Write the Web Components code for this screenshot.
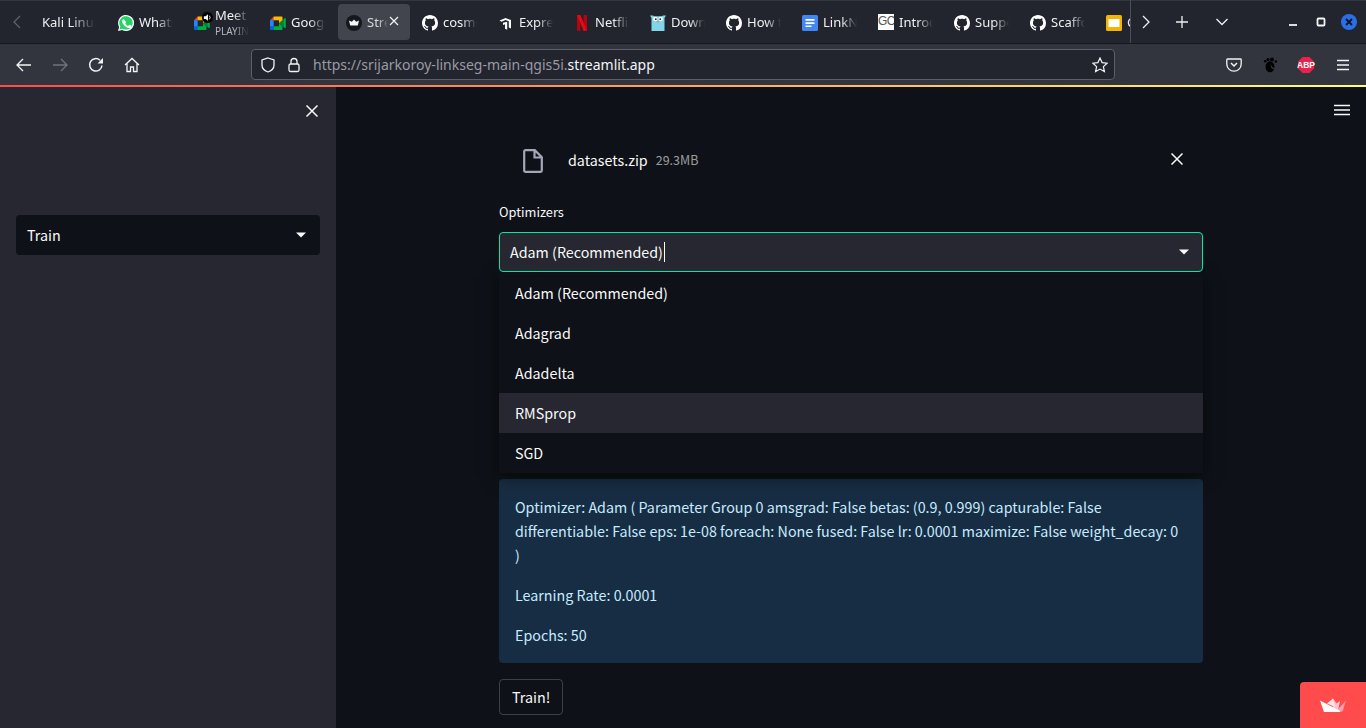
<!DOCTYPE html>
<html>
<head>
<meta charset="utf-8">
<title>linkseg</title>
<style>
  html, body { margin: 0; height: 728px; overflow: hidden; background: #0e1117; }
  body { display: flex; flex-direction: column; font-family: "Noto Sans", sans-serif; }
</style>
</head>
<body>
<browser-tabs>
  <browser-tab>Kali Linux</browser-tab>
  <browser-tab icon="whatsapp">WhatsApp</browser-tab>
  <browser-tab icon="meet" playing>Meet</browser-tab>
  <browser-tab icon="meet">Google Meet</browser-tab>
  <browser-tab icon="streamlit" active>Streamlit</browser-tab>
  <browser-tab icon="github">cosmos</browser-tab>
  <browser-tab icon="express">Express</browser-tab>
  <browser-tab icon="netflix">Netflix</browser-tab>
  <browser-tab icon="gopher">Downloads</browser-tab>
  <browser-tab icon="github">How to</browser-tab>
  <browser-tab icon="docs">LinkNet</browser-tab>
  <browser-tab icon="gc">Introduction</browser-tab>
  <browser-tab icon="github">Support</browser-tab>
  <browser-tab icon="github">Scaffold</browser-tab>
  <browser-tab icon="slides">Google</browser-tab>
</browser-tabs>
<nav-bar></nav-bar>
<app-shell>
  <app-sidebar slot="side">
    <st-select>Train</st-select>
  </app-sidebar>
  <file-row name="datasets.zip" size="29.3MB"></file-row>
  <st-field label="Optimizers">
    <st-select focused>Adam (Recommended)</st-select>
    <st-menu highlight="3">
      <div>Adam (Recommended)</div>
      <div>Adagrad</div>
      <div>Adadelta</div>
      <div>RMSprop</div>
      <div>SGD</div>
    </st-menu>
  </st-field>
  <st-info>
    <p>Optimizer: Adam ( Parameter Group 0 amsgrad: False betas: (0.9, 0.999) capturable: False differentiable: False eps: 1e-08 foreach: None fused: False lr: 0.0001 maximize: False weight_decay: 0<br>)</p>
    <p>Learning Rate: 0.0001</p>
    <p>Epochs: 50</p>
  </st-info>
  <st-button>Train!</st-button>
</app-shell>

<script>
const GITHUB = '<svg width="16" height="16" viewBox="0 0 16 16"><path fill="#fff" d="M8 0C3.58 0 0 3.58 0 8c0 3.54 2.29 6.53 5.47 7.59.4.07.55-.17.55-.38 0-.19-.01-.82-.01-1.49-2.01.37-2.53-.49-2.69-.94-.09-.23-.48-.94-.82-1.13-.28-.15-.68-.52-.01-.53.63-.01 1.08.58 1.23.82.72 1.21 1.87.87 2.33.66.07-.52.28-.87.51-1.07-1.78-.2-3.64-.89-3.64-3.95 0-.87.31-1.59.82-2.15-.08-.2-.36-1.02.08-2.12 0 0 .67-.21 2.2.82.64-.18 1.32-.27 2-.27.68 0 1.36.09 2 .27 1.53-1.04 2.2-.82 2.2-.82.44 1.1.16 1.92.08 2.12.51.56.82 1.27.82 2.15 0 3.07-1.87 3.75-3.65 3.95.29.25.54.73.54 1.48 0 1.07-.01 1.93-.01 2.2 0 .21.15.46.55.38A8.013 8.013 0 0016 8c0-4.42-3.58-8-8-8z"/></svg>';
const MEET = '<svg width="16" height="16" viewBox="0 0 16 16"><path fill="#00832d" d="M9 8l2 2.2 2.6 1.7.5-3.9-.5-3.8-2.7 1.4z"/><path fill="#0066da" d="M0 11.3V14c0 .6.5 1 1 1h2.7l.6-2-.6-1.7-1.9-.6z"/><path fill="#e94235" d="M3.7 1.5L0 5.2l1.9.5 1.8-.5.5-1.7z"/><path fill="#2684fc" d="M3.7 5.2H0v6.1h3.7z"/><path fill="#00ac47" d="M14.9 3.2L13.6 4.1v7.8l1.3 1c.4.3.9 0 .9-.5V3.700c0-.5-.5-.8-.9-.5zM9 8v3.300H3.700V15h7.800c.6 0 1-.5 1-1v-2.300z"/><path fill="#ffba00" d="M11.500 1.500H3.700v3.700H9V8l3.500-2.900V2.500c0-.6-.4-1-1-1z"/></svg>';
const TAB_ICONS = {
  github: GITHUB,
  meet: MEET,
  whatsapp: '<svg width="16" height="16" viewBox="0 0 16 16"><path fill="#fff" d="M0 16l1.100-4.100A8 8 0 1 1 4.200 15z"/><path fill="#25d366" d="M1.500 14.500l.8-3A6.700 6.700 0 1 1 4.600 13.700z"/><path fill="#fff" d="M5.700 4.300c-.2 0-.5 0-.7.300-.3.300-.9.900-.9 2s.9 2.300 1 2.400c.1.200 1.700 2.800 4.300 3.700 1.700.6 2.300.4 2.700.3.600-.1 1.300-.6 1.400-1.100.1-.5.1-1 .1-1.100-.1-.1-.2-.2-.5-.3l-1.500-.7c-.2-.1-.4-.1-.5.100l-.7.900c-.1.100-.3.200-.5.100-.9-.4-1.800-1-2.600-2.300-.1-.2 0-.3.100-.4l.5-.6c.1-.2.1-.3 0-.5L6.300 4.700c-.1-.3-.3-.4-.6-.4z"/></svg>',
  streamlit: '<svg width="16" height="16" viewBox="0 0 16 16"><circle cx="8" cy="8" r="8" fill="#15171e"/><path fill="#f4f4f6" d="M3 5.500l2.800 1.300L8 4.500l2.200 2.300L13 5.500l-1.200 5H4.200z"/></svg>',
  express: '<svg width="16" height="16" viewBox="0 0 16 16"><path fill="#fff" d="M1.500 5.500L7.500 3 13 5v8.500l-2.200-1V6.300L7.500 5 3.500 6.800zM5 7.800L9.200 6.800v8L7 13.700V9.300L5 10z"/></svg>',
  netflix: '<svg width="16" height="16" viewBox="0 0 16 16"><path fill="#b1060f" d="M3 0h3.400v16L3 15.500z"/><path fill="#b1060f" d="M9.600 0H13v15.500L9.600 16z"/><path fill="#e50914" d="M3 0h3.400l6.600 15.500L9.600 16z"/></svg>',
  gopher: '<svg width="16" height="16" viewBox="0 0 16 16"><path fill="#7fd5ea" d="M0 .5h3l1 .7h8l1-.7h3l-1.500 2.500V16H1.500V3z"/><circle cx="5.300" cy="4" r="2.200" fill="#fff"/><circle cx="10.700" cy="4" r="2.200" fill="#fff"/><circle cx="5.800" cy="4.200" r=".9" fill="#1a2a33"/><circle cx="10.200" cy="4.200" r=".9" fill="#1a2a33"/><path fill="#c89a78" d="M6.800 5.800h2.400v1.600H6.800z"/></svg>',
  docs: '<svg width="16" height="16" viewBox="0 0 16 16"><rect width="16" height="16" rx="1.500" fill="#4285f4"/><path fill="#fff" d="M3.500 4h9v1.700h-9zM3.500 7.200h9v1.700h-9zM3.500 10.400h6v1.700h-6z"/></svg>',
  slides: '<svg width="16" height="16" viewBox="0 0 16 16"><rect width="16" height="16" rx="1.500" fill="#f4b400"/><rect x="2.500" y="4" width="11" height="8" fill="#fff"/></svg>',
};
TAB_ICONS.gc = '<span style="display:block;width:16px;height:16px;background:#fff;color:#555;font:400 12px/15px \'Liberation Sans\',sans-serif;letter-spacing:-.5px;overflow:hidden">GC</span>';

class BrowserTab extends HTMLElement {
  connectedCallback() {
    const icon = TAB_ICONS[this.getAttribute("icon")] || "";
    const active = this.hasAttribute("active");
    const playing = this.hasAttribute("playing");
    this.attachShadow({mode: "open"}).innerHTML = `
      <style>
        :host { display: flex; align-items: center; flex: none; width: 72px; height: 36px; margin-right: 4px;
                box-sizing: border-box; padding-left: 8px; gap: 5px; border-radius: 4px; position: relative; }
        :host([active]) { background: #42444e; }
        .ic { width: 16px; height: 16px; flex: none; position: relative; }
        .tx { flex: 1; min-width: 0; overflow: hidden; white-space: nowrap; font-size: 13px; line-height: 18px; color: #f0f0f3;
              -webkit-mask-image: linear-gradient(90deg, #000 50%, transparent 92%); margin-right: 6px; }
        :host([active]) .tx { margin-right: 20px; opacity: .85; }
        .sub { display: block; font-size: 10px; line-height: 14px; color: #b6b7bd; }
        .main { display: block; }
        .spk { position: absolute; left: 8px; top: -2px; width: 11px; height: 11px; background: #000; border-radius: 50%; }
        .x { position: absolute; left: 50px; top: 11px; }
      </style>
      ${icon ? `<span class="ic">${icon}${playing ? `<span class="spk"><svg style="display:block" width="11" height="11" viewBox="0 0 12 12"><path fill="#fff" d="M2 4.500h2L6.500 2.500v7L4 7.500H2z"/><path fill="none" stroke="#fff" d="M8 4a3 3 0 0 1 0 4"/></svg></span>` : ""}</span>` : ""}
      <span class="tx"><span class="main"><slot></slot></span>${playing ? `<span class="sub">PLAYING</span>` : ""}</span>
      ${active ? `<svg class="x" width="12" height="12" viewBox="0 0 12 12"><path stroke="#f4f4f6" stroke-width="1.200" d="M2 2l8 8M10 2l-8 8"/></svg>` : ""}
    `;
  }
}
customElements.define("browser-tab", BrowserTab);

class BrowserTabs extends HTMLElement {
  constructor() {
    super();
    this.attachShadow({mode: "open"}).innerHTML = `
      <style>
        :host { display: flex; height: 44px; flex: none; background: #22242e; box-shadow: inset 0 1px 0 #33353f, inset 0 -1px 0 #16171d; color: #fff; }
        .back { width: 34px; flex: none; display: flex; align-items: center; padding-left: 12px; box-sizing: border-box; }
        .strip { width: 1096px; flex: none; display: flex; align-items: center; overflow: hidden; box-sizing: border-box; }
        .end { flex: 1; display: flex; align-items: center; border-left: 1px solid #4c4e58; height: 43px; }
        .btn { display: flex; align-items: center; justify-content: center; flex: none; }
        .win { width: 16px; height: 16px; margin-right: 12px; }
      </style>
      <div class="back"><svg width="10" height="14" viewBox="0 0 10 14"><path fill="none" stroke="#5f616a" stroke-width="1.300" d="M8 1L2 7l6 6"/></svg></div>
      <div class="strip"><slot></slot></div>
      <div class="end">
        <span class="btn" style="width:29px"><svg width="10" height="14" viewBox="0 0 10 14"><path fill="none" stroke="#f0f0f3" stroke-width="1.300" d="M2 1l6 6-6 6"/></svg></span>
        <span class="btn" style="width:43px"><svg width="14" height="14" viewBox="0 0 14 14"><path stroke="#f0f0f3" stroke-width="1.300" d="M7 1v12M1 7h12"/></svg></span>
        <span class="btn" style="width:37px"><svg width="14" height="10" viewBox="0 0 14 10"><path fill="none" stroke="#f0f0f3" stroke-width="1.300" d="M1.500 2l5.500 5.500L12.500 2"/></svg></span>
        <span class="btn win" style="margin-left:45px"><svg width="10" height="10" viewBox="0 0 10 10" style="margin-top:4px"><rect x="1" y="5" width="8" height="2" fill="#dcdce0"/></svg></span>
        <span class="btn win"><svg width="10" height="10" viewBox="0 0 10 10"><rect x="1.500" y="1.500" width="7" height="7" rx="1" fill="none" stroke="#f4f4f6" stroke-width="1.800"/></svg></span>
        <span class="btn win" style="background:#2a6fe8;border-radius:50%"><svg width="8" height="8" viewBox="0 0 8 8"><path stroke="#12161f" stroke-width="1.800" d="M1 1l6 6M7 1L1 7"/></svg></span>
      </div>
    `;
  }
}
customElements.define("browser-tabs", BrowserTabs);

class NavBar extends HTMLElement {
  constructor() {
    super();
    this.attachShadow({mode: "open"}).innerHTML = `
      <style>
        :host { display: flex; align-items: center; height: 41px; flex: none; background: #32343e; }
        .ic { display: flex; align-items: center; justify-content: center; flex: none; width: 36px; height: 32px; }
        .url { display: flex; align-items: center; width: 864px; height: 31px; margin-left: 101px; box-sizing: border-box; flex: none;
               background: #22242e; border: 1px solid #5c5e68; border-radius: 4px; color: #9a9ba3; font-size: 14px; padding: 0 6px 0 8px; }
        .url b { font-weight: 400; color: #f4f4f6; }
        .t { flex: 1; margin-left: 12px; white-space: nowrap; }
        .right { display: flex; align-items: center; margin-left: 101px; }
        .right .ic { width: 36px; }
        .right .ic:last-child { margin-left: 1px; }
        .abp { font: 700 8.500px "Liberation Sans", sans-serif; fill: #fff; }
      </style>
      <span class="ic" style="margin-left:6px"><svg width="16" height="14" viewBox="0 0 16 14"><path fill="none" stroke="#f4f4f6" stroke-width="1.300" d="M15 7H1.500M7 1L1 7l6 6"/></svg></span>
      <span class="ic"><svg width="16" height="14" viewBox="0 0 16 14"><path fill="none" stroke="#71737c" stroke-width="1.300" d="M1 7h13.500M9 1l6 6-6 6"/></svg></span>
      <span class="ic"><svg width="16" height="16" viewBox="0 0 16 16"><path fill="none" stroke="#f4f4f6" stroke-width="1.500" d="M14 8.500A6.200 6.200 0 1 1 12 3.200"/><path fill="#f4f4f6" d="M15 1v5.500H9.500z"/></svg></span>
      <span class="ic"><svg width="16" height="16" viewBox="0 0 16 16"><path fill="none" stroke="#f4f4f6" stroke-width="1.300" d="M1 8l7-6.500L15 8M3 6.500V14.500h3.500V10h3v4.500H13V6.500"/></svg></span>
      <div class="url">
        <svg width="16" height="16" viewBox="0 0 16 16"><path fill="none" stroke="#f4f4f6" stroke-width="1.300" d="M8 1l6 2v5c0 3.500-3 6-6 7-3-1-6-3.500-6-7V3z"/></svg>
        <svg style="margin-left:11px" width="14" height="16" viewBox="0 0 14 16"><rect x="2" y="7" width="10" height="7.500" rx="1.500" fill="none" stroke="#f4f4f6" stroke-width="1.300"/><path fill="none" stroke="#f4f4f6" stroke-width="1.300" d="M4 7V4.500a3 3 0 0 1 6 0V7"/></svg>
        <span class="t">https://srijarkoroy-linkseg-main-qgis5i.<b>streamlit.app</b></span>
        <svg width="16" height="16" viewBox="0 0 16 16"><path fill="none" stroke="#f4f4f6" stroke-width="1.200" d="M8 1l2.100 4.600 5 .6-3.700 3.400 1 5L8 12.100l-4.400 2.500 1-5L.900 6.200l5-.6z"/></svg>
      </div>
      <div class="right">
        <span class="ic"><svg width="16" height="14" viewBox="0 0 16 14"><path fill="none" stroke="#f4f4f6" stroke-width="1.300" d="M1.500 1h13c.4 0 .7.300.7.700V6A7.200 7.200 0 0 1 .8 6V1.700c0-.4.300-.7.700-.7z"/><path fill="none" stroke="#f4f4f6" stroke-width="1.500" d="M5 5l3 3 3-3"/></svg></span>
        <span class="ic"><svg width="14" height="16" viewBox="0 0 14 16"><g fill="#000"><ellipse cx="7" cy="9.800" rx="4.500" ry="5.500"/><circle cx="2.200" cy="4.200" r="1.300"/><circle cx="5" cy="2.500" r="1.500"/><circle cx="9" cy="2.500" r="2"/><circle cx="12.800" cy="4.500" r="1.200"/></g><path fill="none" stroke="#32343e" stroke-width="1.200" d="M11.500 11.500A3.200 3.200 0 0 1 8 8.500"/></svg></span>
        <span class="ic"><svg width="18" height="18" viewBox="0 0 18 18"><path fill="#e8224a" d="M5.500 1h7L17 5.500v7L12.500 17h-7L1 12.500v-7z"/><text x="9" y="12" text-anchor="middle" class="abp">ABP</text></svg></span>
        <span class="ic"><svg width="14" height="12" viewBox="0 0 14 12"><path stroke="#f4f4f6" stroke-width="1.300" d="M1 1.500h12M1 6h12M1 10.500h12"/></svg></span>
      </div>
    `;
  }
}
customElements.define("nav-bar", NavBar);

class AppShell extends HTMLElement {
  constructor() {
    super();
    this.attachShadow({mode: "open"}).innerHTML = `
      <style>
        :host { display: flex; flex: 1; min-height: 0; position: relative; background: #0e1117; color: #fafafa;
                font-family: "Noto Sans CJK JP", "Noto Sans", sans-serif; font-size: 14.300px; overflow: hidden; }
        .line { position: absolute; left: 0; right: 0; top: 0; height: 2px; background: linear-gradient(90deg, #ff4b4b, #fffd80); z-index: 3; }
        .main { flex: 1; min-width: 0; }
        .col { width: 704px; margin: 0 auto; padding-top: 50px; display: flex; flex-direction: column; }
        .menu { position: absolute; right: 16px; top: 19px; }
        .badge { position: absolute; right: 0; bottom: 0; width: 66px; height: 46px; background: #ff4b4b; border-top-left-radius: 4px;
                 display: flex; align-items: center; justify-content: center; }
      </style>
      <div class="line"></div>
      <slot name="side"></slot>
      <div class="main"><div class="col"><slot></slot></div></div>
      <svg class="menu" width="16" height="12" viewBox="0 0 16 12"><path stroke="#fafafa" stroke-width="1.700" d="M0 1.500h16M0 6h16M0 10.500h16"/></svg>
      <div class="badge"><svg width="26" height="14" viewBox="0 0 26 14"><path fill="#ffd0d6" d="M6 3l7 5 7-5-2 9z"/><path fill="#ffc2cb" d="M13 .5l5.500 8-5.500 4z"/><path fill="#ff9fae" d="M26 2.500l-3.500 11H16z"/><path fill="#fff" d="M0 2.500l19.500 10 1 1.500H4z"/><path fill="#ffe3e7" d="M7 5.500L13 .5l2 8.500z"/></svg></div>
    `;
  }
}
customElements.define("app-shell", AppShell);

class AppSidebar extends HTMLElement {
  constructor() {
    super();
    this.attachShadow({mode: "open"}).innerHTML = `
      <style>
        :host { display: block; width: 336px; flex: none; box-sizing: border-box; background: #262730; padding: 130px 16px 0; position: relative; }
        svg { position: absolute; left: 306px; top: 20px; }
        ::slotted(st-select) { --bg: #0e1117; }
      </style>
      <svg width="12" height="12" viewBox="0 0 12 12"><path stroke="#fafafa" stroke-width="1.500" d="M.5.500l11 11M11.500.500l-11 11"/></svg>
      <slot></slot>
    `;
  }
}
customElements.define("app-sidebar", AppSidebar);

class FileRow extends HTMLElement {
  connectedCallback() {
    this.attachShadow({mode: "open"}).innerHTML = `
      <style>
        :host { display: flex; align-items: center; height: 50px; position: relative; padding-left: 24px; }
        .name { margin-left: 25px; line-height: 24px; }
        .size { margin-left: 8px; font-size: 12.500px; color: rgba(250,250,250,.6); line-height: 24px; }
        .x { position: absolute; right: 20px; top: 18px; }
        .f { flex: none; margin-top: 2px; }
      </style>
      <svg class="f" width="20" height="24" viewBox="0 0 20 24"><path fill="none" stroke="#a3a8b8" stroke-width="2.200" d="M2.500 1.200h9.300l7 7V21.500c0 .700-.500 1.300-1.200 1.300H2.500c-.7 0-1.300-.6-1.300-1.300V2.500c0-.7.600-1.300 1.300-1.300zM11.500 1.500V8.500h7"/></svg>
      <span class="name">${this.getAttribute("name")}</span>
      <span class="size">${this.getAttribute("size")}</span>
      <svg class="x" width="12" height="12" viewBox="0 0 12 12"><path stroke="#fafafa" stroke-width="1.500" d="M.5.500l11 11M11.500.500l-11 11"/></svg>
    `;
  }
}
customElements.define("file-row", FileRow);

class StField extends HTMLElement {
  connectedCallback() {
    this.attachShadow({mode: "open"}).innerHTML = `
      <style>
        :host { display: block; position: relative; margin-top: 17px; }
        label { display: block; font-size: 12.800px; line-height: 20px; margin-bottom: 10px; color: #fafafa; }
      </style>
      <label>${this.getAttribute("label")}</label>
      <slot></slot>
    `;
  }
}
customElements.define("st-field", StField);

class StSelect extends HTMLElement {
  constructor() {
    super();
    this.attachShadow({mode: "open"}).innerHTML = `
      <style>
        :host { display: flex; align-items: center; height: 40px; box-sizing: border-box; padding: 0 13px 0 10px; position: relative; z-index: 3;
                background: var(--bg, #262730); border-radius: 4px; line-height: 24px; }
        :host([focused]) { border: 1px solid #09e6a6; }
        :host(:not([focused])) { padding-left: 11px; padding-right: 14px; }
        .txt { flex: 1; display: flex; align-items: center; }
        .caret { display: none; width: 1px; height: 20px; background: #fafafa; margin-left: 1px; }
        :host([focused]) .caret { display: block; }
      </style>
      <span class="txt"><slot></slot><span class="caret"></span></span>
      <svg width="10" height="6" viewBox="0 0 10 6"><path fill="#fafafa" d="M0 .5h10L5 5.500z"/></svg>
    `;
  }
}
customElements.define("st-select", StSelect);

class StMenu extends HTMLElement {
  connectedCallback() {
    this.attachShadow({mode: "open"}).innerHTML = `
      <style>
        :host { display: block; position: absolute; left: 0; right: 0; top: 71px; z-index: 2; background: #0e1117;
                box-shadow: 0 4px 16px rgba(0,0,0,.5); }
        ::slotted(div) { height: 40px; line-height: 40px; padding: 0 16px; }
        ::slotted(div:nth-child(${+this.getAttribute("highlight") + 1})) { background: #262730; }
      </style>
      <slot></slot>
    `;
  }
}
customElements.define("st-menu", StMenu);

class StInfo extends HTMLElement {
  constructor() {
    super();
    this.attachShadow({mode: "open"}).innerHTML = `
      <style>
        :host { display: block; margin-top: 207px; padding: 16px; height: 184px; box-sizing: border-box; background: #172d43; border-radius: 4px;
                color: #c7ebff; line-height: 24px; }
        ::slotted(p) { margin: 0 0 16px; }
      </style>
      <slot></slot>
    `;
  }
}
customElements.define("st-info", StInfo);

class StButton extends HTMLElement {
  constructor() {
    super();
    this.attachShadow({mode: "open"}).innerHTML = `
      <style>
        :host { display: inline-flex; align-self: flex-start; align-items: center; height: 36px; margin-top: 16px; padding: 0 12px; box-sizing: border-box;
                border: 1px solid rgba(250,250,250,.2); border-radius: 4px; line-height: 24px; }
      </style>
      <slot></slot>
    `;
  }
}
customElements.define("st-button", StButton);
</script>
</body>
</html>
